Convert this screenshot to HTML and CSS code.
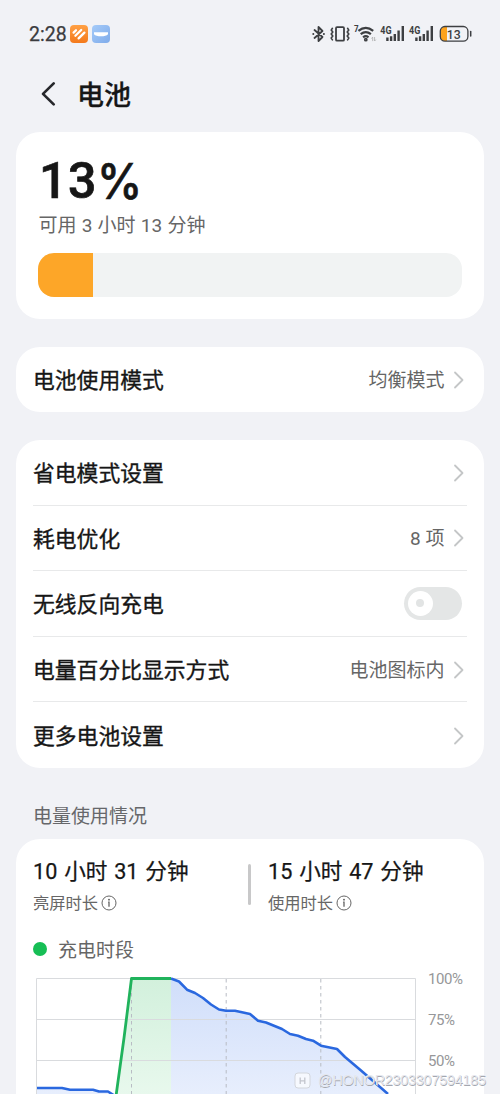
FILE: index.html
```html
<!DOCTYPE html>
<html lang="zh-CN">
<head>
<meta charset="UTF-8">
<meta name="viewport" content="width=device-width, initial-scale=1">
<title>电池</title>
<link rel="stylesheet" href="styles.css">
</head>
<body>
<svg class="defs" width="0" height="0">
  <symbol id="chevron" viewBox="0 0 12 20"><path d="M2 2.5 9.5 10 2 17.5" fill="none" stroke="#c4c6c7" stroke-width="1.8" stroke-linecap="round" stroke-linejoin="round"/></symbol>
  <symbol id="info" viewBox="0 0 16 16"><circle cx="8" cy="8" r="7" fill="none" stroke="#666" stroke-width="1"/><circle cx="8" cy="4.7" r=".9" fill="#555"/><path d="M7.2 7.1H8v4.6" fill="none" stroke="#555" stroke-width="1.2"/></symbol>
</svg>
<div class="screen">
  <header class="status">
    <span class="clock">2:28</span>
    <svg class="app-icon" width="18" height="18" viewBox="0 0 18 18">
      <defs><linearGradient id="og" x2="0" y2="1"><stop stop-color="#ffa044"/><stop offset="1" stop-color="#f47a1c"/></linearGradient></defs>
      <rect width="18" height="18" rx="4" fill="url(#og)"/>
      <path d="M3.6 7.6 6 5.2M5.4 10.8 11.2 5M8.6 13.4 14.4 7.6" stroke="#fff" stroke-width="2.3" stroke-linecap="round"/>
    </svg>
    <svg class="app-icon second" width="18" height="18" viewBox="0 0 18 18">
      <defs><linearGradient id="bg" x2="1" y2="1"><stop stop-color="#a5cbf9"/><stop offset="1" stop-color="#7fabea"/></linearGradient></defs>
      <rect width="18" height="18" rx="4" fill="url(#bg)"/>
      <path d="M2 7.3h14v2q-2 2-7 2t-7-2z" fill="#fff"/>
    </svg>
    <svg class="signals" width="162" height="24" viewBox="311 22 162 24">
      <g fill="none" stroke="#3d3f42" stroke-width="1.8" stroke-linejoin="round" stroke-linecap="round">
        <path d="m314.5 30 8 7-4 4V27l4 4-8 7"/>
        <path d="M313.2 34h.2M323.8 34h.2"/>
        <rect x="336" y="27.2" width="8" height="13.5" rx="1"/>
        <path d="m332.4 28.3-1.2 1.8 1.6 2-1.6 2 1.6 2-1.6 2 1.2 1.8M347.6 28.3l1.2 1.8-1.6 2 1.6 2-1.6 2 1.6 2-1.2 1.8" stroke-width="1.6"/>
      </g>
      <g fill="none" stroke="#3d3f42" stroke-width="2.2">
        <path d="M358.4 30.8q7.4-6 14.8 0M360.7 34.2q5.1-4.2 10.2 0M363.1 37.3q2.7-2.2 5.4 0"/>
        <circle cx="365.8" cy="39.7" r=".8"/>
      </g>
      <path d="m371.5 38.5 1.2-1.4v4M374.6 37v4l1.2-1.4" stroke="#aaa" stroke-width=".8" fill="none"/>
      <text class="net" x="354" y="32" textLength="4.6" lengthAdjust="spacingAndGlyphs">7</text>
      <text class="net four" x="380.3" y="34" textLength="11.3" lengthAdjust="spacingAndGlyphs">4G</text>
      <text class="net four" x="409.1" y="34" textLength="11.3" lengthAdjust="spacingAndGlyphs">4G</text>
      <path d="M387.4 41v-3.5M391.1 41v-4.7M394.8 41v-7M398.6 41v-10.5M402.8 41V26M416.4 41v-3.5M420.1 41v-4.7M423.8 41v-7M427.6 41v-10.5M431.8 41V26" stroke="#3d3f42" stroke-width="2.4"/>
      <path d="M447 27h-2.5q-4 0-4 4v6q0 4 4 4h2.5z" fill="#fda31d"/>
      <rect x="440.3" y="26.5" width="27.6" height="14.6" rx="4.6" fill="none" stroke="#3d3f42" stroke-width="1.3"/>
      <path d="M470.7 31.5v4.4" stroke="#3d3f42" stroke-width="1.5" stroke-linecap="round"/>
      <text class="charge" x="446.8" y="38.6" textLength="14" lengthAdjust="spacingAndGlyphs">13</text>
    </svg>
  </header>

  <div class="title-bar">
    <svg width="18" height="26" viewBox="0 0 18 26"><path d="M15.7 2.4 5 12.9 15.7 23.4" fill="none" stroke="#26272b" stroke-width="2.7" stroke-linecap="round" stroke-linejoin="round"/></svg>
    <h1>电池</h1>
  </div>

  <section class="card level">
    <div class="percent">13<span class="sign">%</span></div>
    <div class="remaining">可用 3 小时 13 分钟</div>
    <div class="bar"><div class="bar-fill" style="width:13.1%"></div></div>
  </section>

  <section class="card list mode">
    <div class="row"><span class="label">电池使用模式</span><span class="value">均衡模式</span><svg class="chev"><use href="#chevron"/></svg></div>
  </section>

  <section class="card list">
    <div class="row"><span class="label">省电模式设置</span><svg class="chev"><use href="#chevron"/></svg></div>
    <div class="row"><span class="label">耗电优化</span><span class="value">8 项</span><svg class="chev"><use href="#chevron"/></svg></div>
    <div class="row"><span class="label">无线反向充电</span><span class="toggle"><span class="knob"></span></span></div>
    <div class="row"><span class="label">电量百分比显示方式</span><span class="value">电池图标内</span><svg class="chev"><use href="#chevron"/></svg></div>
    <div class="row"><span class="label">更多电池设置</span><svg class="chev"><use href="#chevron"/></svg></div>
  </section>

  <h2>电量使用情况</h2>

  <section class="card usage">
    <div class="stats">
      <div class="stat">
        <div class="time">10 小时 31 分钟</div>
        <div class="caption">亮屏时长<svg class="info"><use href="#info"/></svg></div>
      </div>
      <div class="divider"></div>
      <div class="stat">
        <div class="time">15 小时 47 分钟</div>
        <div class="caption">使用时长<svg class="info"><use href="#info"/></svg></div>
      </div>
    </div>
    <div class="legend"><span class="dot"></span><span class="legend-text">充电时段</span></div>
    <svg class="chart" width="468" height="124" viewBox="16 970 468 124">
      <defs>
        <linearGradient id="green" gradientUnits="userSpaceOnUse" x1="0" y1="978" x2="0" y2="1142"><stop stop-color="#d2f0dc"/><stop offset="1" stop-color="#f1fcf4"/></linearGradient>
        <linearGradient id="blue" gradientUnits="userSpaceOnUse" x1="0" y1="978" x2="0" y2="1142"><stop stop-color="#d0defa"/><stop offset="1" stop-color="#f1f5fe"/></linearGradient>
      </defs>
      <path d="M37 1088H62L70 1089.7H93L99 1091.5H108L115 1096V1142H37z" fill="url(#blue)"/>
      <path d="M116 1096 124 1038 131.5 978.5H171V1142H116z" fill="url(#green)"/>
      <path d="M171 978.5 179 981.5 187 989.7 195 993 203 998 211 1004.5 219 1009.5 226 1010.8H235L250 1014 258 1020.7 266 1022.5 282 1029 290 1034 298 1035.7 306 1039 313 1040.7 321 1045.7 337 1049 345 1057 361 1070.5 388 1094V1142H171z" fill="url(#blue)"/>
      <path d="M36.5 1094V978.5H415.5V1094M37 1019.5H415M37 1060.5H415" fill="none" stroke="#d9dbde" stroke-width="1"/>
      <path d="M131.5 979V1094M226.2 979V1094M320.8 979V1094" stroke="#b8bcc4" stroke-width="1" stroke-dasharray="3.5 3.5"/>
      <path d="M37 1088H62L70 1089.7H93L99 1091.5H108L115 1096M171 978.5 179 981.5 187 989.7 195 993 203 998 211 1004.5 219 1009.5 226 1010.8H235L250 1014 258 1020.7 266 1022.5 282 1029 290 1034 298 1035.7 306 1039 313 1040.7 321 1045.7 337 1049 345 1057 361 1070.5 388 1094" fill="none" stroke="#2a68df" stroke-width="2.6" stroke-linejoin="round"/>
      <path d="M116 1096 124 1038 131.5 978.5H171" fill="none" stroke="#20b35c" stroke-width="2.8" stroke-linejoin="round"/>
      <g class="axis">
        <text x="428" y="984" textLength="35">100%</text>
        <text x="428" y="1025" textLength="27">75%</text>
        <text x="428" y="1066" textLength="27">50%</text>
      </g>
    </svg>
  </section>
  <svg class="watermark" width="198" height="22" viewBox="292 1069 198 22">
    <rect x="295" y="1073" width="15" height="15" rx="3" fill="#fff" fill-opacity=".65" stroke="#d3d6dc" stroke-width="1"/>
    <path d="M300.2 1077.5v6.5M304.8 1077.5v6.5M300.2 1080.8h4.6" stroke="#c3c6ce" stroke-width="1.3"/>
    <text class="mark" x="318" y="1085" textLength="168">@HONOR2303307594185</text>
  </svg>
</div>
</body>
</html>
```
FILE: styles.css
```css
* { box-sizing: border-box; }
body {
  margin: 0;
  background: #f1f2f6;
  color: #161616;
  font-family: Roboto, "Noto Sans CJK SC", sans-serif;
}
svg { display: block; flex: none; }
.defs { position: absolute; }
.screen {
  position: relative;
  width: 500px;
  height: 1094px;
  overflow: hidden;
  display: flex;
  flex-direction: column;
}
.status {
  display: flex;
  align-items: center;
  height: 68px;
  padding: 0 27px 0 29px;
  flex: none;
}
.clock {
  width: 41px;
  padding-top: 1px;
  font-size: 19.5px;
  line-height: 24px;
  color: #3b3c3f;
  -webkit-text-stroke: .25px #3b3c3f;
}
.second { margin-left: 4px; }
.signals { margin-left: auto; }
.net { font: 700 9px Roboto, sans-serif; fill: #3d3f42; }
.four { font-size: 11.5px; }
.charge { font: 500 13.5px Roboto, sans-serif; fill: #3d3f42; }
.title-bar {
  display: flex;
  align-items: center;
  gap: 21px;
  height: 52px;
  padding-left: 38px;
  margin-bottom: 12px;
  flex: none;
}
h1 {
  margin: 0;
  padding-top: 3px;
  font-size: 27px;
  line-height: 40px;
  font-weight: 500;
  -webkit-text-stroke: .3px #161616;
}
.card {
  width: 467.5px;
  margin-left: 16px;
  background: #fff;
  border-radius: 24px;
  flex: none;
}
.level { height: 187px; padding: 22px 22px 0; margin-bottom: 28px; }
.percent {
  display: flex;
  height: 55px;
  padding-left: 1px;
  font-size: 50px;
  line-height: 55px;
  font-weight: 500;
  letter-spacing: .6px;
  -webkit-text-stroke: .7px #161616;
}
.sign {
  font-family: Inter, sans-serif;
  font-size: 49px;
  font-weight: 500;
  letter-spacing: 0;
  transform: scaleX(.93);
  transform-origin: left;
}
.remaining {
  font-size: 19px;
  line-height: 28px;
  height: 44px;
  padding: 3px 0 0 .5px;
  color: #666;
  word-spacing: .5px;
}
.bar { height: 44px; border-radius: 16px; overflow: hidden; background: #f1f3f3; }
.bar-fill { height: 100%; background: #fda628; }
.list { padding: 0 17px; }
.mode { margin-bottom: 28px; }
.row {
  display: flex;
  align-items: center;
  height: 65.6px;
  padding-right: 2px;
}
.mode .row { height: 65px; }
.row:not(:last-child) { border-bottom: 1px solid #e8e9ea; }
.label {
  flex: 1;
  padding-top: 4px;
  font-size: 21.8px;
  line-height: 32px;
  -webkit-text-stroke: .35px #161616;
}
.mode .label { padding-top: 3px; }
.value { font-size: 19px; line-height: 28px; padding-top: 3px; color: #666; margin-right: 8px; }
.chev { width: 12px; height: 20px; margin-top: 1px; }
.mode .chev { margin-top: 0; }
.toggle {
  width: 58px;
  height: 33px;
  margin-right: 3px;
  padding: 4px;
  border-radius: 17px;
  background: #e4e6e6;
}
.knob {
  display: grid;
  place-items: center;
  width: 25px;
  height: 25px;
  border-radius: 50%;
  background: #fff;
}
.knob::after { content: ""; width: 8px; height: 8px; border-radius: 50%; background: #e2e4e4; }
h2 {
  margin: 34px 0 7px 33px;
  font-size: 19px;
  line-height: 30px;
  font-weight: 400;
  color: #66676a;
}
.usage { height: 300px; border-radius: 24px 24px 0 0; }
.stats { display: flex; height: 93px; padding: 16px 17px 0; }
.stat:first-child { width: 215px; }
.time {
  font-size: 21.6px;
  line-height: 33px;
  white-space: nowrap;
  word-spacing: 1.5px;
  -webkit-text-stroke: .25px #161616;
}
.caption {
  display: flex;
  align-items: center;
  gap: 3px;
  font-size: 16.3px;
  line-height: 24px;
  padding-top: 4px;
  color: #666;
}
.info { width: 16px; height: 16px; margin-top: -1px; }
.divider { width: 3px; height: 41px; margin: 9px 17px 0 0; border-radius: 2px; background: #c8c8c9; }
.legend {
  display: flex;
  align-items: center;
  gap: 11px;
  height: 35px;
  padding-left: 17px;
  font-size: 19px;
  color: #666;
  margin-bottom: 3px;
}
.legend-text { padding-bottom: 1px; }
.dot { width: 14px; height: 14px; border-radius: 50%; background: #16be55; }
.axis text { font: 400 15px Roboto, sans-serif; fill: #969799; }
.watermark { position: absolute; left: 292px; top: 1069px; }
.mark {
  font: 400 14.5px "Liberation Sans", Arial, sans-serif;
  fill: #e6e8ee;
  text-shadow: .5px .5px .5px #a4a7af;
}
```
